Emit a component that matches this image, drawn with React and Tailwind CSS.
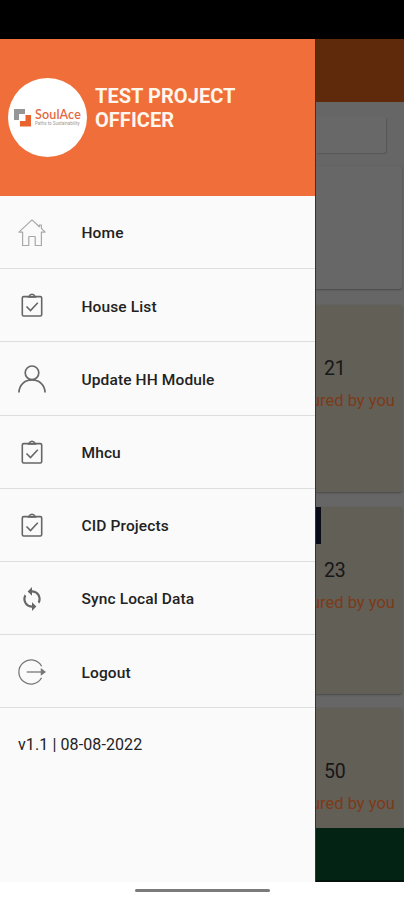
const CheckIcon = () => (
  <svg className="w-7 h-7" viewBox="0 0 28 28" fill="none" stroke="#666" strokeWidth="1.6">
    <rect x="4.300" y="4.600" width="19.400" height="19.400" rx="1.400" />
    <path d="M9.700 5h8.600M11.200 4.200c.4-1.300 1.500-2 2.800-2s2.400.7 2.800 2" />
    <path d="m8.500 14.500 4 4 7.300-7.700" />
  </svg>
);

const HomeIcon = () => (
  <svg className="w-7 h-7" viewBox="0 0 28 28" fill="none" stroke="#a8a8a8" strokeWidth="1.200" strokeLinejoin="round">
    <path d="M14 .9 .9 13.100h3.700v13.400h6.200v-9h6.400v9h6.200V13.100h3.700L23.400 9.300V6h-2v1.700Z" />
  </svg>
);

const UserIcon = () => (
  <svg className="w-7 h-7" viewBox="0 0 28 28" fill="none" stroke="#686868" strokeWidth="1.7">
    <circle cx="14" cy="7.800" r="6.800" />
    <path d="M.9 27.500C1.300 20 6.600 14.800 14 14.800S26.700 20 27.100 27.500" />
  </svg>
);

const SyncIcon = () => (
  <svg className="w-[26px] h-[26px]" viewBox="0 0 24 24" fill="#666">
    <path d="M12 4V1L8 5l4 4V6c3.310 0 6 2.690 6 6 0 1.010-.25 1.970-.7 2.800l1.460 1.460C19.540 15.030 20 13.570 20 12c0-4.420-3.580-8-8-8zm0 14c-3.310 0-6-2.690-6-6 0-1.010.25-1.970.7-2.800L5.240 7.740C4.460 8.970 4 10.430 4 12c0 4.420 3.580 8 8 8v3l4-4-4-4v3z" />
  </svg>
);

const LogoutIcon = () => (
  <svg className="w-7 h-7" viewBox="0 0 28 28" fill="none" stroke="#777" strokeWidth="1.3">
    <path d="M23.600 8.200a12.100 12.100 0 1 0 0 11.600" />
    <path d="M8.800 14H25" />
    <path d="m23.400 11.400 3.600 2.600-3.600 2.600Z" fill="#777" />
  </svg>
);

const MENU = [
  { label: 'Home', Icon: HomeIcon },
  { label: 'House List', Icon: CheckIcon },
  { label: 'Update HH Module', Icon: UserIcon },
  { label: 'Mhcu', Icon: CheckIcon },
  { label: 'CID Projects', Icon: CheckIcon },
  { label: 'Sync Local Data', Icon: SyncIcon },
  { label: 'Logout', Icon: LogoutIcon },
];

function Logo() {
  return (
    <div className="w-[79px] h-[79px] shrink-0 rounded-full bg-white flex items-center justify-center gap-1">
      <svg className="w-[17px] h-[18px] shrink-0" viewBox="0 0 17 18">
        <path d="M0 0h11v5H5v6H0Z" fill="#969696" />
        <path d="M11.500 6H17v11.500H6V12h5.500Z" fill="#e9632f" />
      </svg>
      <div className="w-[46px] whitespace-nowrap">
        <div className="font-['Lato'] font-semibold text-[12.500px] leading-[12px] tracking-[0.15px] text-[#e2693f]">SoulAce</div>
        <div className="text-[4.500px] leading-[6px] text-[#9a9a9a]">Paths to Sustainability</div>
      </div>
    </div>
  );
}

function StatCard({ count, marker }) {
  return (
    <div className="h-[187px] mr-[2px] mb-[14.500px] rounded-r-[3px] bg-[#625f57] shadow-[0_1px_2px_#484848] flex flex-col shrink-0">
      <div className="h-[37px]">
        {marker && <div className="w-[5px] h-full bg-[#090b19]" />}
      </div>
      <div className="mt-[15px] pl-[8px] text-[19.500px] leading-[24px] tracking-[-0.3px] text-[#171717]">{count}</div>
      <div className="mt-[8px] -ml-[5px] text-[16.500px] leading-[24px] whitespace-nowrap text-[#7d3a18]">ured by you</div>
    </div>
  );
}

export default function App() {
  return (
    <div className="w-[404px] h-[900px] flex flex-col overflow-hidden bg-white font-['Roboto',sans-serif]">
      <div className="h-[39px] shrink-0 bg-black" />

      <div className="h-[843px] shrink-0 flex">
        {/* Drawer */}
        <aside className="w-[315px] shrink-0 bg-[#fafafa] flex flex-col">
          <div className="h-[157px] shrink-0 bg-[#ef6e39] pl-2 flex items-center">
            <Logo />
            <div className="ml-2 mb-[18px] w-[160px] text-[20px] leading-[23.500px] tracking-[0.05px] font-bold text-[#fff6ee]">
              TEST PROJECT OFFICER
            </div>
          </div>
          <nav>
            {MENU.map(({ label, Icon }) => (
              <div key={label} className="h-[73.200px] border-b border-[#dedede] pl-[18px] pt-[2px] flex items-center">
                <div className="w-7 flex justify-center">
                  <Icon />
                </div>
                <span className="ml-[35.500px] pt-[2px] text-[15.500px] font-medium tracking-[0.12px] text-[#222]">{label}</span>
              </div>
            ))}
          </nav>
          <div className="pl-[18px] mt-[25px] text-[16px] leading-6 tracking-[0.1px] text-[#222]">v1.1 | 08-08-2022</div>
        </aside>

        {/* Dimmed page behind the drawer */}
        <main className="flex-1 min-w-0 overflow-hidden border-l border-[#333] bg-[#666] flex flex-col">
          <div className="h-[63px] shrink-0 bg-[#5f2a0b]" />
          <div className="h-[726px] shrink-0 overflow-hidden flex flex-col">
            <div className="h-[36px] mt-[15px] mr-[18px] shrink-0 rounded-br-[3px] bg-[#686868] shadow-[1px_1px_1px_#575757]" />
            <div className="h-[123px] mt-[13px] mr-[2px] mb-[16px] shrink-0 rounded-r-[3px] bg-[#676767] shadow-[0_1px_2px_#484848]" />
            <StatCard count={21} />
            <StatCard count={23} marker />
            <StatCard count={50} />
          </div>
          <div className="flex-1 bg-[#032315] border-b-2 border-[#02130b]" />
        </main>
      </div>

      <div className="flex-1 flex justify-center">
        <div className="w-[135px] h-[3px] mt-[7px] rounded-full bg-[#7b7b7b]" />
      </div>
    </div>
  );
}
